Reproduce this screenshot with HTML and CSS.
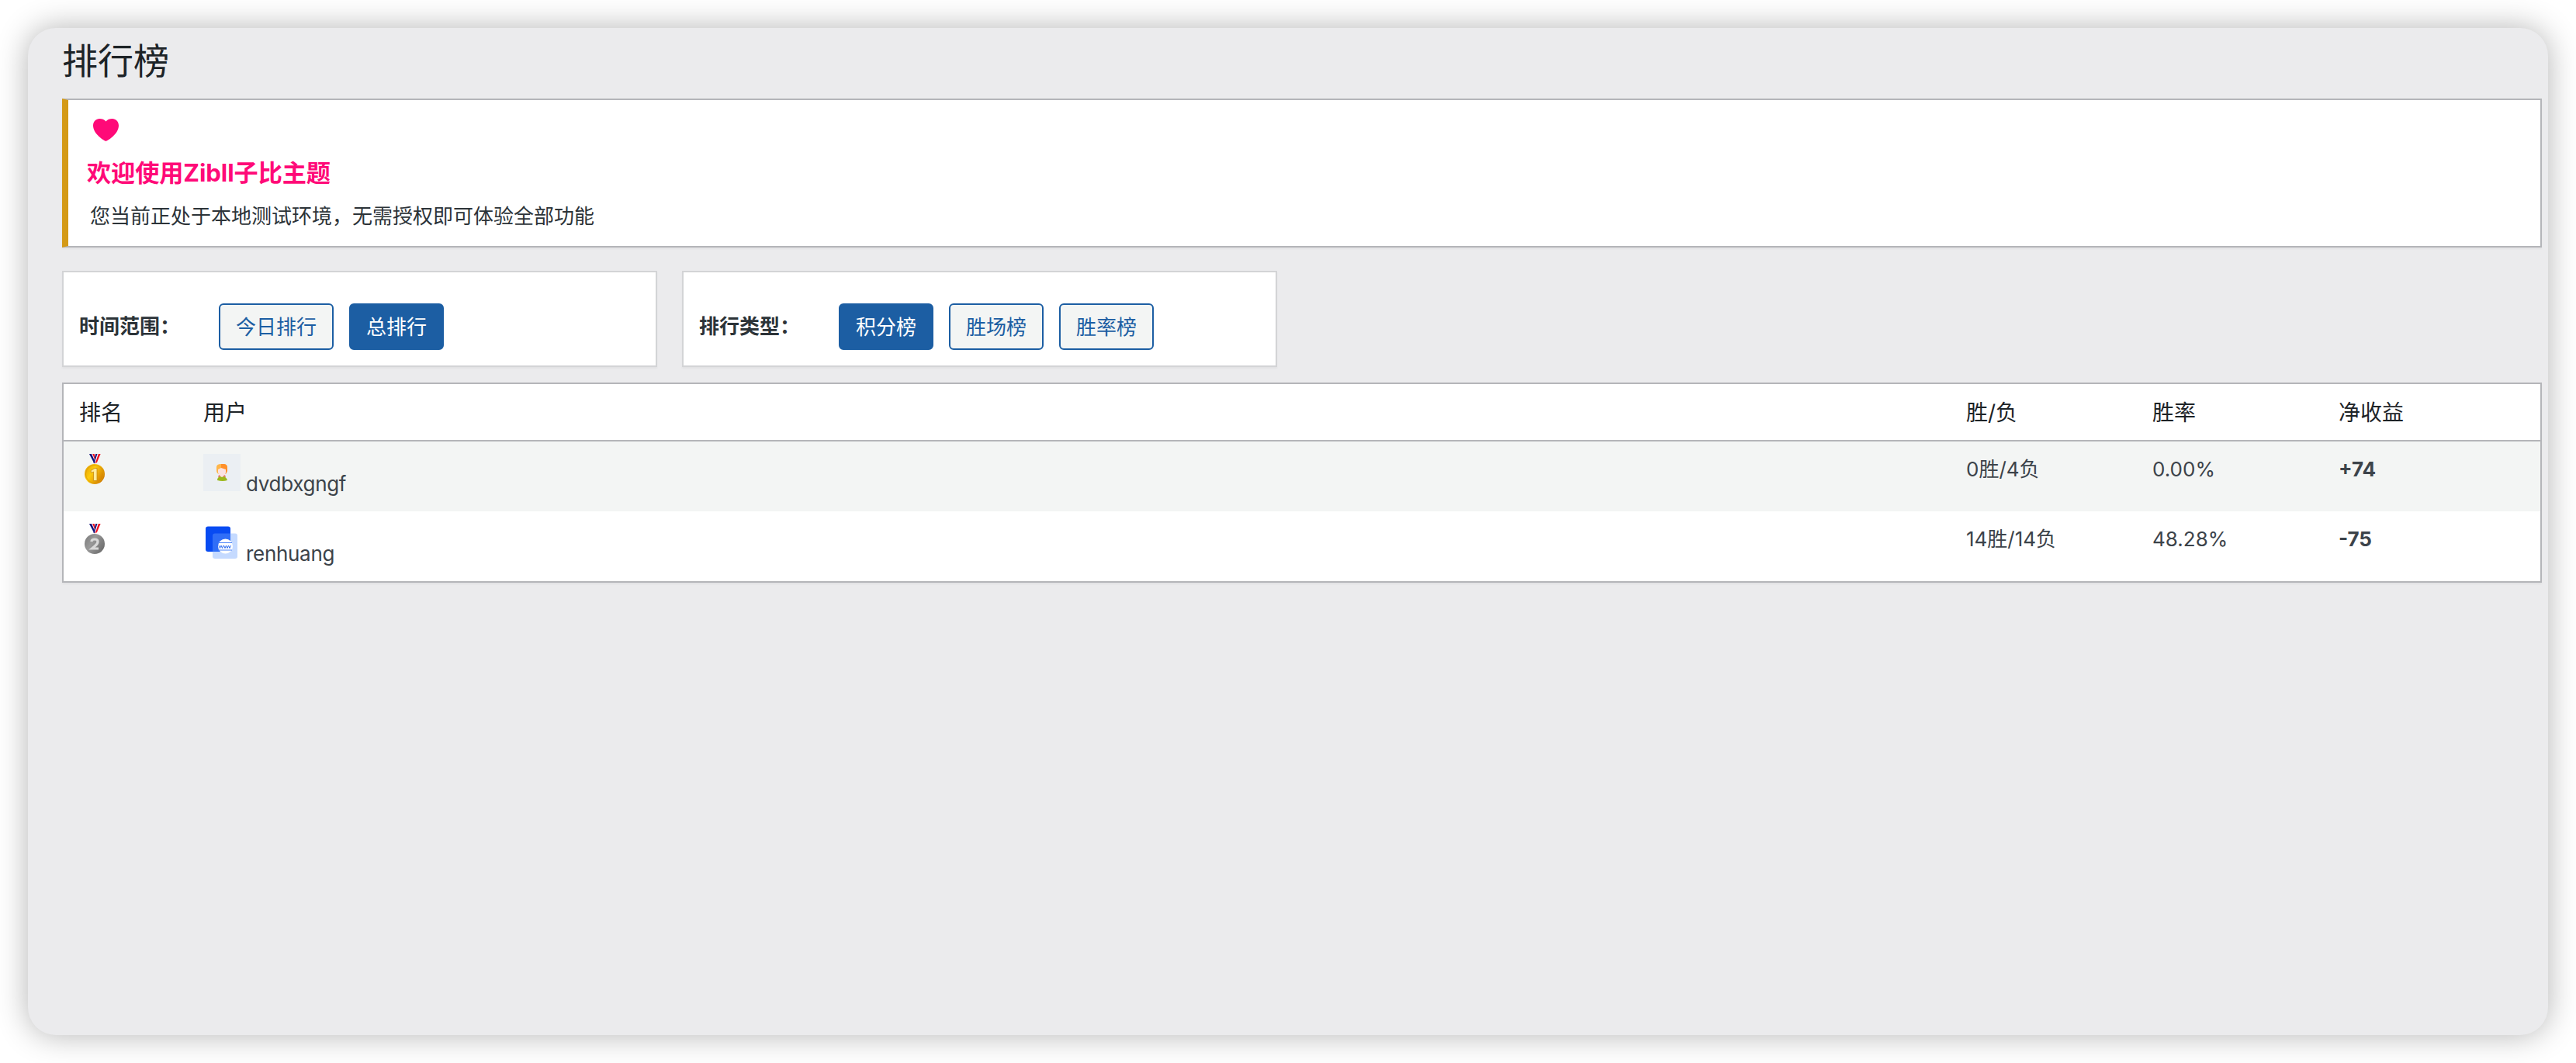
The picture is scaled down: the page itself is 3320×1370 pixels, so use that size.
FILE: index.html
```
<!DOCTYPE html>
<html lang="zh-CN">
<head>
    <meta charset="UTF-8">
    <meta name="viewport" content="width=device-width, initial-scale=1.0">
    <title>排行榜</title>
    <link rel="stylesheet" href="styles.css">
</head>
<body>
    <div class="window">
        <h1>排行榜</h1>
        <div class="notice">
            <svg class="heart" viewBox="0 0 33 29">
                <path d="M16.500 29C15 29 0 20 0 8.800C0 3.500 3.700 0 8.300 0C11.600 0 14.600 1 16.500 3.500C18.400 1 21.400 0 24.700 0C29.300 0 33 3.500 33 8.800C33 20 18 29 16.500 29Z" fill="#ff0a78"/>
            </svg>
            <h3>欢迎使用Zibll子比主题</h3>
            <p>您当前正处于本地测试环境，无需授权即可体验全部功能</p>
        </div>
        <div class="filters">
            <div class="filter-card">
                <strong>时间范围：</strong>
                <a class="button">今日排行</a>
                <a class="button button-primary">总排行</a>
            </div>
            <div class="filter-card">
                <strong>排行类型：</strong>
                <a class="button button-primary">积分榜</a>
                <a class="button">胜场榜</a>
                <a class="button">胜率榜</a>
            </div>
        </div>
        <table class="rank-table">
            <thead>
                <tr>
                    <th class="col-rank">排名</th>
                    <th>用户</th>
                    <th class="col-data">胜/负</th>
                    <th class="col-data">胜率</th>
                    <th class="col-profit">净收益</th>
                </tr>
            </thead>
            <tbody>
                <tr>
                    <td>
                        <svg class="medal" viewBox="0 0 26 39">
                            <defs>
                                <linearGradient id="gold" x1="0" y1="0" x2="1" y2="0.6">
                                    <stop offset="0" stop-color="#e09a00"/>
                                    <stop offset="0.45" stop-color="#fdcb0c"/>
                                    <stop offset="1" stop-color="#d27c00"/>
                                </linearGradient>
                            </defs>
                            <path d="M6 0h14.500l-5 11.500-2.500 1z" fill="#fff"/>
                            <path d="M6 0h3l4.500 10-1 2.500z" fill="#10107a"/>
                            <path d="M10.200 0h2.500l1 5-.8 2z" fill="#f01020"/>
                            <path d="M14.200 0h2.300l-4 12h-1z" fill="#10107a"/>
                            <path d="M17.800 0h2.800l-4.600 11-2.500 1.500z" fill="#f01020"/>
                            <circle cx="13" cy="26" r="13" fill="url(#gold)"/>
                            <circle cx="13" cy="26" r="11.500" fill="none" stroke="#d99a08" stroke-width="0.800"/>
                            <path d="M8 21.500l5-3h3v16h-4.500v-11.500l-3 1.500z" fill="#ffeb9a" stroke="#c98a10" stroke-width="0.800"/>
                        </svg>
                    </td>
                    <td>
                        <div class="user">
                            <svg class="avatar" viewBox="0 0 48 48">
                                <rect width="48" height="48" fill="#ebeff3"/>
                                <path d="M17 21v-4q0-4 6-4h2q6 0 6 4v4q-1 4-3 5h-8q-3-1-3-5z" fill="#ffb64a"/>
                                <path d="M23 13h3q5 0 5 5v4l-2 4-6-7z" fill="#ff902b"/>
                                <path d="M19 20l4-2 6 2v4q-1 4-5 5-4-1-5-5z" fill="#fbe2e2"/>
                                <path d="M20 27l4 2 4-2 1 3h-10z" fill="#e97b77"/>
                                <path d="M22 27h4v3h-4z" fill="#fbe2e2"/>
                                <path d="M18 34q0-4 4-5l2 1 2-1q4 1 5 5-6 2-13 0z" fill="#9cb81c"/>
                            </svg>
                            <span>dvdbxgngf</span>
                        </div>
                    </td>
                    <td>0胜/4负</td>
                    <td>0.00%</td>
                    <td><strong>+74</strong></td>
                </tr>
                <tr>
                    <td>
                        <svg class="medal" viewBox="0 0 26 39">
                            <defs>
                                <linearGradient id="silver" x1="0" y1="0" x2="1" y2="0.6">
                                    <stop offset="0" stop-color="#777"/>
                                    <stop offset="0.45" stop-color="#999"/>
                                    <stop offset="1" stop-color="#707070"/>
                                </linearGradient>
                            </defs>
                            <path d="M6 0h14.500l-5 11.500-2.500 1z" fill="#fff"/>
                            <path d="M6 0h3l4.500 10-1 2.500z" fill="#10107a"/>
                            <path d="M10.200 0h2.500l1 5-.8 2z" fill="#f01020"/>
                            <path d="M14.200 0h2.300l-4 12h-1z" fill="#10107a"/>
                            <path d="M17.800 0h2.800l-4.600 11-2.500 1.500z" fill="#f01020"/>
                            <circle cx="13" cy="26" r="13" fill="url(#silver)"/>
                            <path d="M9 23q0-3 4-3t4 3q0 3-4 6l-3.500 3h8.500" fill="none" stroke="#d8d8d8" stroke-width="3.200"/>
                        </svg>
                    </td>
                    <td>
                        <div class="user">
                            <svg class="avatar" viewBox="0 0 48 48">
                                <rect x="3" y="3.500" width="32" height="32.500" rx="3" fill="#084bf2"/>
                                <rect x="12" y="12.500" width="32" height="32.500" rx="3" fill="#6ea3ff" fill-opacity="0.400"/>
                                <circle cx="28.500" cy="29" r="9.500" fill="#fff"/>
                                <path d="M19 24.500h18M19 34h18" stroke="#4a82f8" stroke-width="1"/>
                                <path d="M20 28l1.500 3.500 1.500-3.500 1.500 3.500 1.500-3.500M26.500 28l1.500 3.500 1.500-3.500 1.500 3.500 1.500-3.500M32.500 28l1.500 3.500 1.500-3.500" fill="none" stroke="#2f6df0" stroke-width="1"/>
                            </svg>
                            <span>renhuang</span>
                        </div>
                    </td>
                    <td>14胜/14负</td>
                    <td>48.28%</td>
                    <td><strong>-75</strong></td>
                </tr>
            </tbody>
        </table>
    </div>
</body>
</html>
```

FILE: styles.css
```
* {
    box-sizing: border-box;
}
body {
    margin: 0;
    padding: 36px;
    background: #fff;
    color: #3c434a;
    font-family: Inter, "Noto Sans CJK SC", sans-serif;
    font-size: 26px;
}
.window {
    height: 1298px;
    padding: 18px 8px 0 44px;
    background: #ebebed;
    border-radius: 36px;
    box-shadow: 0 0 40px rgba(0, 0, 0, 0.3);
}
h1 {
    margin: 0;
    height: 73px;
    color: #1d2327;
    font-size: 46px;
    font-weight: 400;
    line-height: 48px;
}
.notice {
    height: 192px;
    padding: 24px 24px 0 24px;
    background: #fff;
    border: 2px solid #b4b5b9;
    border-left: 8px solid #d49a17;
    box-shadow: 0 2px 2px rgba(0, 0, 0, 0.04);
}
.heart {
    display: block;
    width: 33px;
    height: 29px;
    margin-left: 8px;
}
.notice h3 {
    margin: 21px 0 0;
    color: #ff0a78;
    font-size: 31.2px;
    letter-spacing: -0.1px;
    line-height: 40px;
}
.notice p {
    margin: 18px 0 0 4px;
    line-height: 36px;
    color: #2c3338;
}
.filters {
    display: flex;
    gap: 32px;
    margin: 30px 0 20px;
}
.filter-card {
    display: flex;
    align-items: center;
    gap: 20px;
    width: 767px;
    height: 124px;
    padding: 20px 20px 0;
    color: #2c3338;
    background: #fff;
    border: 2px solid #d3d4d6;
    box-shadow: 0 2px 2px rgba(0, 0, 0, 0.04);
}
.filter-card strong {
    width: 160px;
    font-weight: 700;
    line-height: 36px;
}
.button {
    height: 60px;
    padding: 0 20px;
    color: #1c5ea3;
    background: #f3f5f4;
    border: 2px solid #1c5ea3;
    border-radius: 6px;
    line-height: 57px;
}
.button-primary {
    color: #fff;
    background: #1c5ea3;
}
.rank-table {
    width: 100%;
    background: #fff;
    border: 2px solid #b4b5b9;
    border-spacing: 0;
    table-layout: fixed;
    box-shadow: 0 2px 2px rgba(0, 0, 0, 0.04);
}
.rank-table th {
    height: 74px;
    padding: 0 20px 2px;
    color: #1d2327;
    border-bottom: 2px solid #b4b5b9;
    font-size: 28px;
    font-weight: 400;
    text-align: left;
}
.rank-table td {
    height: 90px;
    padding: 16px 20px 0;
    line-height: 39px;
    vertical-align: top;
}
.rank-table tbody tr:nth-child(odd) {
    background: #f3f5f4;
}
.rank-table .col-rank {
    width: 160px;
}
.rank-table .col-data {
    width: 240px;
}
.rank-table .col-profit {
    width: 280px;
}
.medal {
    display: block;
    width: 26px;
    height: 39px;
    margin-left: 7px;
}
.user {
    display: flex;
    align-items: baseline;
    gap: 7px;
    letter-spacing: -0.3px;
}
.avatar {
    width: 48px;
    height: 48px;
}
```
